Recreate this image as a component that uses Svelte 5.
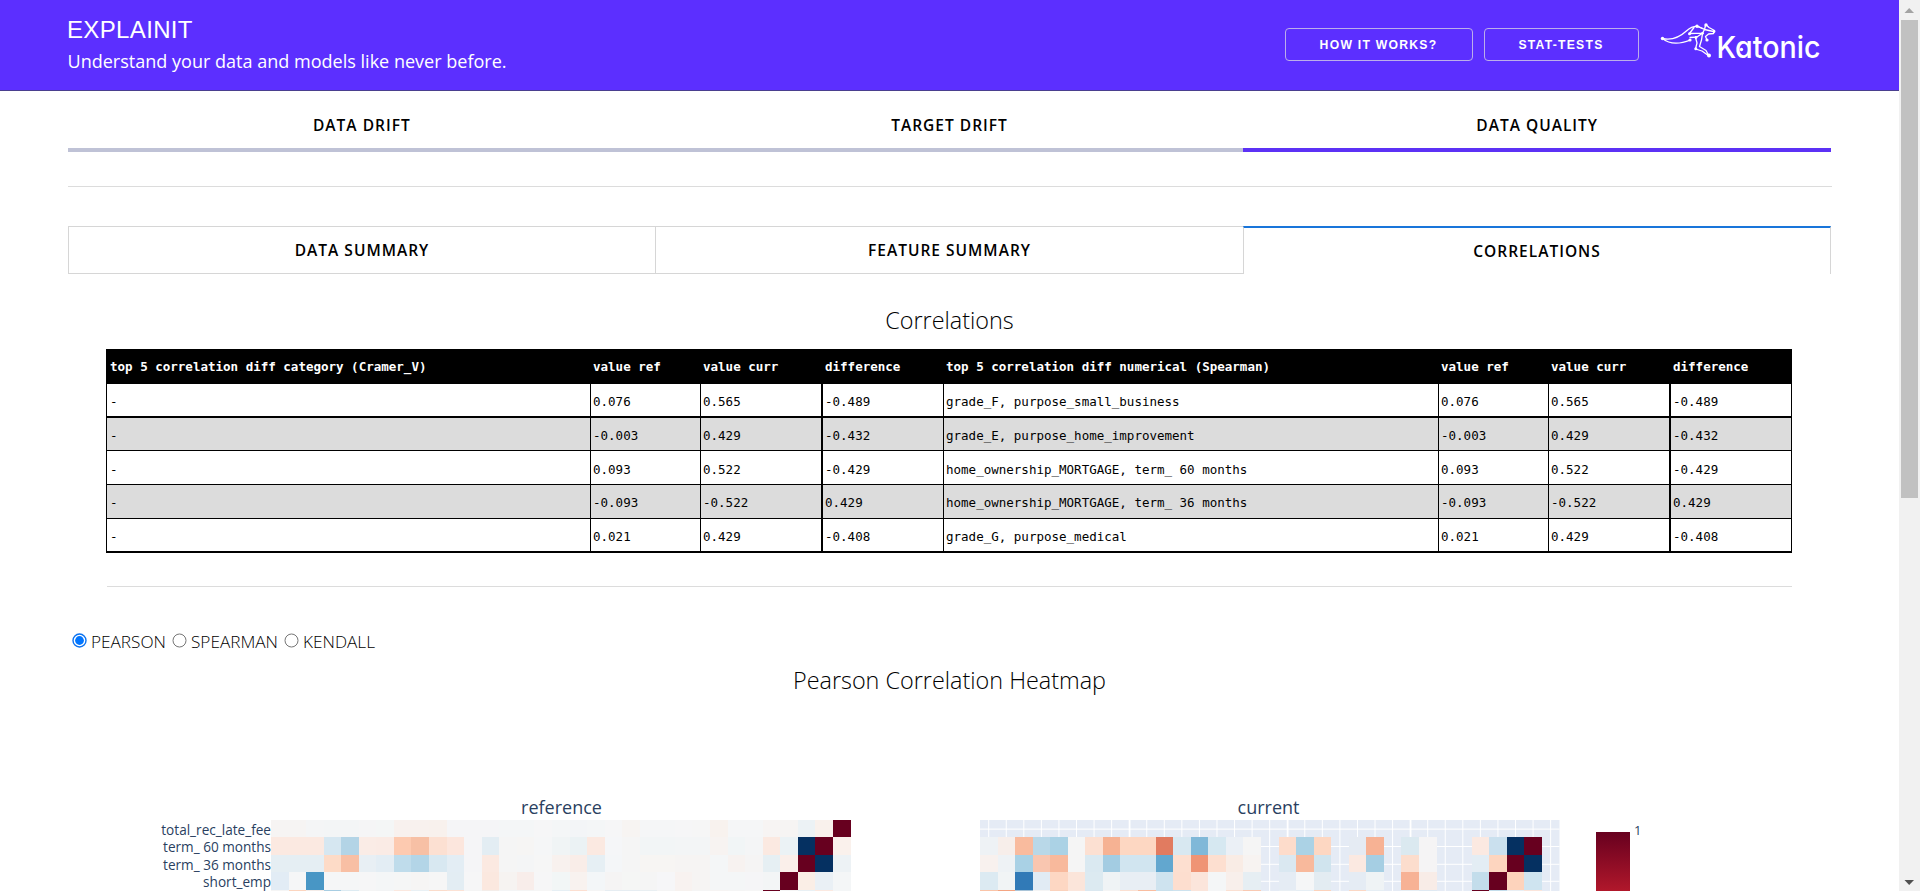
<script>
  const M = '67001f', N = '053061';
  const parse = (s) => s.split(' ').map((c) => (c === '.' ? null : c === 'M' ? M : c === 'N' ? N : c));

  const reference = [
    'f6f4f3 f6f4f3 f4f5f6 f3f5f6 f3f5f6 f5f5f6 f4f6f6 f8f1ee f8f1ee f8f1ed f5f5f7 f5f5f7 f5f5f7 f4f6f7 f4f6f7 f6f6f7 f4f6f7 f3f5f7 f4f6f7 f6f6f7 f7f4f2 f5f6f7 f5f6f7 f6f6f7 f6f6f6 f8f2ee f5f6f7 f5f6f7 f7f4f3 f6f4f3 ecf2f5 f9f1ec M',
    'fbe9e1 fbe9e1 fbe9e1 d6e7f1 b3d4e6 faece6 faebe5 fdcab0 f7c0a5 fce0d2 fce6dd f5f5f7 e3edf3 f5f5f5 f6f5f4 f5f6f7 f0f4f5 ebf2f4 fbe9e1 f5f6f8 f5f5f5 f2f5f6 f2f5f6 f3f5f6 f3f5f6 f7f3f1 f1f5f6 f4f5f6 fbe9e1 ebf2f5 N M faf1ec',
    'e5eef3 e5eef3 e5eef3 fddbc7 f8bfa4 e8eff4 e3edf4 bfdceb b3d5e7 d8e8f1 e3edf4 f5f5f7 fbe9e1 f5f5f5 f4f5f6 f6f6f6 f8f1ee f9ede8 e6eff4 f4f6f8 f5f5f5 f7f5f3 f7f5f3 f6f4f3 f6f4f3 f4f6f7 f7f2f0 f5f4f4 e6eff3 faefea M N edf2f5',
    'e2ecf5 f5f6f7 4896c5 f5f6f7 f5f6f7 f6f6f7 f4f6f7 f5f6f6 f6f5f4 f6f6f6 e3edf3 f6f6f7 fbe8df f6f3f1 f8edea f6f6f7 f2f6f6 f8f2ef f3f6f8 f5f4f4 f5f6f5 f5f5f5 f6f6f8 f8f2f0 f6f4f3 f4f6f7 f4f6f7 f5f5f7 f3f5f6 M faeee6 eaf0f5 f4f6f7',
    'f5f5f5 fcd5bf f4ece8 a7cde2 ddebf2 f5f5f5 f3f4f5 fbe8df e9f0f4 fbdccb fce2d5 f5f5f5 f4ede9 f4f5f6 f5f5f5 f6f6f6 e6eff4 fcdfd1 f5f5f5 e6edf2 e6edf2 e9eff2 f5f5f5 f7f2ef f5f5f5 f6f4f3 f5f5f5 f6f6f6 M f5f5f5 e9f0f4 fbe9e1 f4f6f7'
  ].map(parse);

  const current = [
    '. . . . . . . . . . . . . . . . . . . . . . . . . . . . . . . . .',
    'eef2f5 f7eeea f9bb9e b9d8e8 abd2e5 f5f5f5 fce0d2 f6b293 fdd7c2 fdd7c2 e17b60 d8e8f1 80b8d8 d6e8f1 ebf0f6 f5f5f5 . fddccb abd2e5 fdd7c2 . e5ebf3 f7b294 . dbe9f0 f5f4f5 . . fbe9e1 cae0ee N M .',
    'f8f1ee eef2f5 a9d1e5 f9c6b0 f8b99c f5f5f5 dae9f1 a3cce2 d1e5f0 d1e5f0 62a7cf fddfd0 ef9475 fddfd0 f9ece5 f7f3f1 . dae8f1 f8b99c d0e4ee . fbe9e1 a5cee3 . fcddcd f5f4f5 . . e3edf4 fdd5bf M N .',
    'dceaf2 f1f4f5 317ab7 e1ebf4 fdd7c3 fbe5da dceaf1 eff3f5 e8eef4 e8eef4 cee3ef fddecf fbe5db f4f6f7 f8efeb e6eef3 . e5ecf4 f5f6f7 e3ecf2 . e5ecf4 eff3f5 . f7b295 f8ece7 . . c3ddeb M fdd3bc cfe4f0 .',
    'fac4a8 f4a582 a9c4d8 f5f5f5 fbd2bc fce6dc dbe8f0 f5f5f5 fbe0d2 f9bda0 c9e0ec cde2ee fbe5db f5f6f7 fbe0d2 f9c9b2 . e9eff4 e6eef4 fcd2bb . fbd7c4 e6eef4 . e6eef4 dfe9f2 . . M c3ddeb e9eff4 fbe5db .'
  ].map(parse);

  const CW = 17.56;
  const ys = [0, 17.4, 35.2, 52.2, 69.8, 87];
  const yLabels = ['total_rec_late_fee', 'term_ 60 months', 'term_ 36 months', 'short_emp'];

  const rows = [
    ['grade_F, purpose_small_business', '0.076', '0.565', '-0.489'],
    ['grade_E, purpose_home_improvement', '-0.003', '0.429', '-0.432'],
    ['home_ownership_MORTGAGE, term_ 60 months', '0.093', '0.522', '-0.429'],
    ['home_ownership_MORTGAGE, term_ 36 months', '-0.093', '-0.522', '0.429'],
    ['grade_G, purpose_medical', '0.021', '0.429', '-0.408']
  ];
  let method = $state('PEARSON');
</script>

{#snippet heat(data, grid)}
  <svg class="heat" width="580" height="80" viewBox="0 0 580 80">
    {#if grid}
      <rect width="579.5" height="80" fill="#e5ebf5" />
      {#each Array(33) as _, i}
        <rect x={i * CW + 8.2} y="0" width={i === 8 || i === 17 || i === 24 ? 1.8 : 1} height="80" fill="#fff" />
      {/each}
      {#each ys.slice(0, 4) as y}
        <rect x="0" y={y + 8.6} width="579.5" height="1" fill="#fff" />
      {/each}
    {/if}
    {#each data as row, r}
      {#each row as c, i}
        {#if c}
          <rect x={i * CW} y={ys[r]} width={CW + 0.05} height={ys[r + 1] - ys[r]} fill={'#' + c} shape-rendering="crispEdges" />
        {/if}
      {/each}
    {/each}
  </svg>
{/snippet}

<div class="window">
  <div class="page">
    <header>
      <div class="brand">
        <h1>EXPLAINIT</h1>
        <p>Understand your data and models like never before.</p>
      </div>
      <div class="actions">
        <button class="how">HOW IT WORKS?</button>
        <button class="stat">STAT-TESTS</button>
        <svg class="logo" width="164" height="44" viewBox="0 0 164 44">
          <g fill="none" stroke="#fff" stroke-width="1.3" stroke-linecap="round" stroke-linejoin="round">
            <path d="M2.500 15.500 C13 18 21 13 27 7.500 C30 4.800 33 3.500 37 3.200 L43 5.500" />
            <path d="M2.500 15.500 C9 21 19 21.500 30.500 17" />
            <path d="M29.500 10.500 L34 4.500 M29.500 10.500 L42.500 10.200 M30 14.500 L36.500 14.200 L42.500 10.200 L44.500 6.500 L37 3.200" />
            <path d="M46 1.800 L49 4.500 L54.500 7.500 L53.500 10.500 L48.500 11 L45.500 13.500 L47 17" />
            <path d="M45.500 2.500 L44.500 6.500 L53.500 8.500" />
            <path d="M35.500 14.500 L37 20 L35.500 26 L42 28 L49 33 L46 27.500 L39.500 23.500 L41.500 17 L42.500 10.500" />
          </g>
          <g fill="#fff">
            <circle cx="2.500" cy="15.500" r="1.700" /><circle cx="37" cy="3.200" r="1.700" /><circle cx="46" cy="1.900" r="1.700" />
            <circle cx="29.500" cy="10.800" r="1.500" /><circle cx="30" cy="17" r="1.600" /><circle cx="36" cy="14.500" r="1.400" />
            <circle cx="42.500" cy="10.300" r="1.400" /><circle cx="47" cy="17" r="1.600" /><circle cx="35.800" cy="25.800" r="1.500" />
            <circle cx="49" cy="32.500" r="2" /><circle cx="54" cy="8.500" r="1.400" />
          </g>
          <text x="56.500" y="34.500" textLength="104" lengthAdjust="spacingAndGlyphs">Katonic</text>
          <circle cx="81.500" cy="26.500" r="1.700" fill="#fff" />
        </svg>
      </div>
    </header>

    <main>
      <nav class="primary">
        <div>DATA DRIFT</div>
        <div>TARGET DRIFT</div>
        <div class="on">DATA QUALITY</div>
      </nav>
      <div class="rule"></div>
      <nav class="secondary">
        <div>DATA SUMMARY</div>
        <div>FEATURE SUMMARY</div>
        <div class="on">CORRELATIONS</div>
      </nav>

      <h2 class="t1">Correlations</h2>
      <div class="table">
        <div class="tr head">
          <span>top 5 correlation diff category (Cramer_V)</span><span>value ref</span><span>value curr</span><span>difference</span>
          <span>top 5 correlation diff numerical (Spearman)</span><span>value ref</span><span>value curr</span><span>difference</span>
        </div>
        {#each rows as [name, ref, cur, diff]}
          <div class="tr">
            <span>-</span><span>{ref}</span><span>{cur}</span><span>{diff}</span>
            <span>{name}</span><span>{ref}</span><span>{cur}</span><span>{diff}</span>
          </div>
        {/each}
      </div>
      <div class="rule inner"></div>

      <div class="radios">
        {#each ['PEARSON', 'SPEARMAN', 'KENDALL'] as m}
          <button class="radio" onclick={() => (method = m)}>
            <svg width="15" height="15" viewBox="0 0 15 15">
              <circle cx="7.500" cy="7.500" r="6.500" fill="#fff" stroke={method === m ? '#0b72f0' : '#767676'} stroke-width={method === m ? 1.4 : 1} />
              {#if method === m}<circle cx="7.500" cy="7.500" r="4.400" fill="#0075ff" />{/if}
            </svg><span>{m}</span>
          </button>
        {/each}
      </div>
      <h2 class="t2">Pearson Correlation Heatmap</h2>

      <section class="figure">
        <div class="ylabels">
          {#each yLabels as l}<span>{l}</span>{/each}
        </div>
        <div class="plot">
          <h3>reference</h3>
          {@render heat(reference, false)}
        </div>
        <div class="plot second">
          <h3>current</h3>
          {@render heat(current, true)}
        </div>
        <div class="bar"></div>
        <span class="one">1</span>
      </section>
    </main>
  </div>
  <div class="scroll">
    <svg width="20" height="20" viewBox="0 0 20 20"><path d="M5.500 13 L10.200 8 L15 13Z" fill="#a3a3a3" /></svg>
    <div class="thumb"></div>
    <svg class="down" width="20" height="18" viewBox="0 0 20 18"><path d="M5.500 7 L10.200 12 L15 7Z" fill="#505050" /></svg>
  </div>
</div>

<style>
  :global(body) { overflow: hidden; background: #fff; }
  .window { display: flex; width: 1920px; height: 891px; overflow: hidden; font-family: 'Open Sans', sans-serif; color: #000; }
  .page { width: 1899px; height: 891px; overflow: hidden; background: #fff; }
  h1, h2, h3, p { margin: 0; font-weight: 400; white-space: nowrap; }
  button { cursor: pointer; }

  header { box-sizing: border-box; height: 91px; padding: 0 75px 0 67px; display: flex; justify-content: space-between; background: #5c2fff; border-bottom: 1px solid #4a3f8f; color: #fff; }
  .brand { padding-top: 14px; }
  h1 { font: 400 24px/31px 'Liberation Sans', sans-serif; letter-spacing: 0.35px; }
  .brand p { font-size: 18.05px; line-height: 32px; margin-left: 0.5px; }
  .actions { display: flex; align-items: flex-start; }
  .actions button { box-sizing: border-box; height: 33px; margin-top: 28px; padding: 0 1px 0 0; border: 1px solid #bcaeea; border-radius: 4px; background: transparent; color: #fff; font: 700 12.2px/32px 'Liberation Sans', sans-serif; letter-spacing: 1.25px; }
  .how { width: 188px; margin-right: 11px; }
  .stat { width: 155px; margin-right: 21px; }
  .logo { margin-top: 23px; overflow: visible; }
  .logo text { font: 500 30px Inter, sans-serif; font-feature-settings: 'cv11'; fill: #fff; }

  main { padding-left: 68px; }
  nav { display: grid; text-align: center; font-weight: 600; font-size: 15.5px; letter-spacing: 1px; }
  .primary { width: 1763px; grid-template-columns: 1fr 1fr 1fr; height: 61px; }
  .primary div { line-height: 68px; height: 57px; border-bottom: 4px solid #bfc2d6; }
  .primary .on { border-color: #5c31f5; }
  .rule { width: 1764px; height: 1px; margin-top: 34px; background: #dcdcdc; }
  .secondary { width: 1763px; height: 48px; margin-top: 39px; grid-template-columns: 587px 588px 588px; }
  .secondary div { box-sizing: border-box; border: 1px solid #d6d6d6; border-right: 0; line-height: 46px; }
  .secondary .on { border-top: 2px solid #1975da; border-right: 1px solid #d6d6d6; border-bottom: 0; background: #fff; }

  h2 { width: 1763px; text-align: center; font-weight: 300; font-size: 23.4px; line-height: 32px; }
  .t1 { margin-top: 30px; }
  .table { width: 1686px; height: 204px; margin: 13px 0 0 38px; font-family: 'DejaVu Sans Mono', monospace; font-size: 12.52px; background: #000; }
  .tr { display: grid; grid-template-columns: 483px 109px 120px 121px 494px 109px 120px 121px; column-gap: 1px; width: 1684px; height: 33px; margin: 0 0 1px 1px; overflow: hidden; }
  .tr span { background: #fff; line-height: 36px; padding-left: 2px; white-space: pre; overflow: hidden; }
  .tr span:first-child { padding-left: 3px; }
  .tr span:nth-child(4n) { margin-left: 1px; }
  .tr:nth-child(odd) span { background: #dcdcdc; }
  .tr.head { height: 35px; margin-bottom: 0; }
  .tr.head span { background: #000; color: #fff; font-weight: 700; }
  .tr:nth-child(2) { height: 32px; margin-bottom: 2px; }
  .tr:nth-child(3) { height: 32px; }
  .tr:nth-child(4) span { line-height: 38px; }
  .tr:nth-child(6) { height: 32px; margin-bottom: 0; }
  .rule.inner { width: 1685px; margin: 33px 0 0 39px; }

  .radios { display: flex; gap: 5px; margin: 42px 0 0 3px; height: 26px; }
  .radio { display: flex; align-items: flex-start; padding: 0; border: 0; background: none; font: 300 17.2px/26px 'Open Sans', sans-serif; color: #000; }
  .radio svg { margin: 4px 4px 0 1px; }
  .t2 { margin-top: 9px; }

  .figure { display: flex; margin-top: 100px; height: 120px; color: #2a3f5f; }
  .ylabels { width: 203px; padding-top: 25px; display: flex; flex-direction: column; align-items: flex-end; }
  .ylabels span { font-size: 13.6px; line-height: 17.4px; height: 17.4px; white-space: nowrap; }
  .plot { width: 580px; }
  .plot.second { margin-left: 128.500px; }
  h3 { font-size: 18px; line-height: 23px; text-align: center; height: 24px; padding-left: 1px; }
  .second h3 { padding: 0 2px 0 0; }
  .heat { display: block; }
  .bar { width: 34px; height: 73px; margin: 36px 4px 0 36.500px; background: linear-gradient(#67001f, #b2182b 60px, #bd2a35); }
  .one { font-size: 13px; line-height: 18px; margin-top: 25px; }

  .scroll { width: 21px; height: 891px; background: #f1f1f1; display: flex; flex-direction: column; }
  .scroll svg { display: block; }
  .thumb { width: 17px; height: 478px; margin-left: 2px; background: #c1c1c1; }
  .down { margin-top: auto; }
</style>
